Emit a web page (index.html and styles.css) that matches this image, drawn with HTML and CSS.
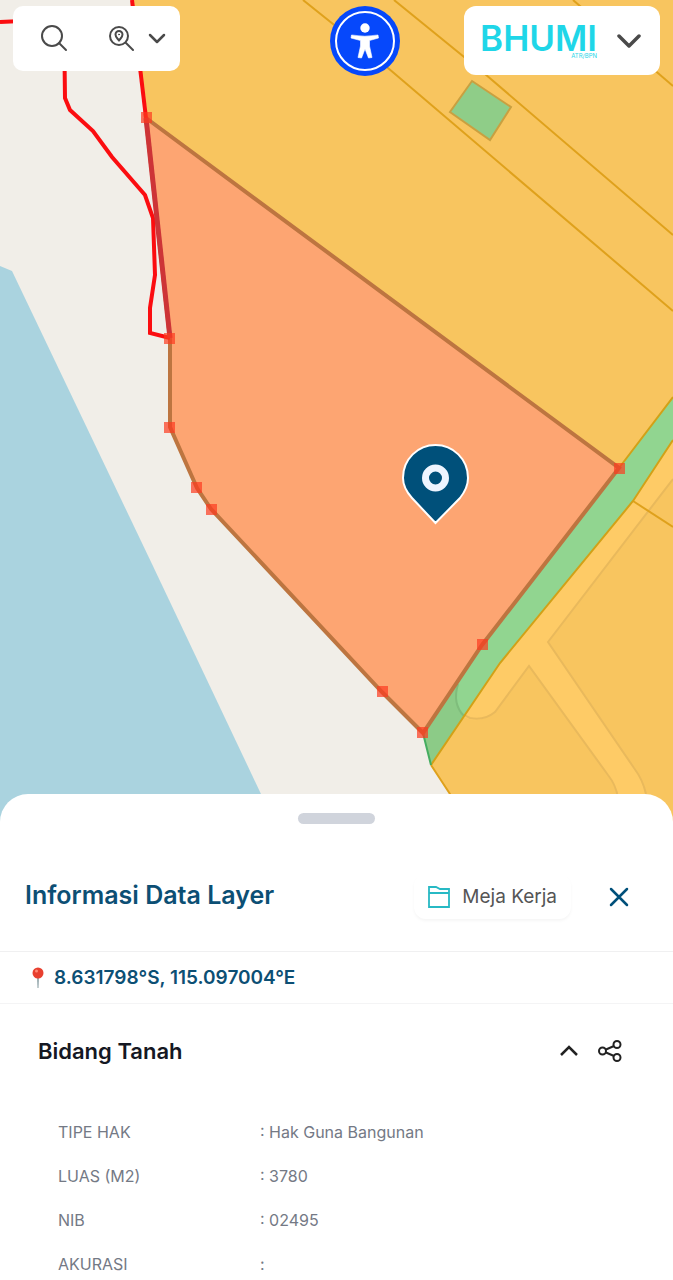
FILE: index.html
```html
<!DOCTYPE html>
<html lang="id">
<head>
  <meta charset="UTF-8">
  <meta name="viewport" content="width=device-width, initial-scale=1.0">
  <title>BHUMI ATR/BPN</title>
  <link rel="stylesheet" href="styles.css">
</head>
<body>
  <main class="map">
    <svg class="map-canvas" viewBox="0 0 673 830" role="img" aria-label="Peta bidang tanah">
      <rect width="673" height="830" fill="#f1eee8"/>
      <!-- laut -->
      <path d="M0 266 L12 271 L152 564 L261 794 L278 830 H0 Z" fill="#aad3df"/>

      <!-- zona kuning -->
      <path d="M133 0 L146 118 L619 468 L423 733 L431 765 L450 794 L474 830 H673 V0 Z" fill="#f8c55f"/>
      <!-- jalan -->
      <path d="M673 440 L633 501 L500 663 L462 716 Q478 726 495 712 L529 666 L608 775 Q616 785 618 798 L618 830 H646 V798 Q643 780 634 768 L548 642 L673 479 Z" fill="#fecb66"/>
      <path d="M455 696 Q456 712 470 718 Q484 721 495 712 L529 666 L608 775 Q616 785 618 798 M646 794 Q643 780 634 768 L548 642 L673 479" fill="none" stroke="#e9b95c" stroke-width="2"/>

      <!-- batas zona -->
      <g fill="none" stroke="#dfa11c" stroke-width="2">
        <path d="M303 0 L388 68 L673 311"/>
        <path d="M394 0 L485 74 L673 235"/>
        <path d="M573 0 L673 86"/>
        <path d="M633 501 L673 527"/>
        <path d="M431 765 L450 794 L474 830"/>
      </g>

      <path d="M472 81 L511 107 L490 140 L450 112 Z" fill="#8fcd88" stroke="#c9a040" stroke-width="2"/>

      <!-- sempadan hijau -->
      <path d="M673 397 L619 468 L482 645 L423 733 L431 765 L500 663 L633 501 L673 440 Z" fill="#91d590"/>
      <path d="M458 684 L423 733 L431 765 L464 716 Q452 704 458 684 Z" fill="#8ccb87"/>
      <path d="M464 716 Q452 704 458 684" fill="none" stroke="#7fbd7c" stroke-width="2"/>
      <path d="M619 468 L673 397 M431 765 L500 663 L633 501 L673 440" fill="none" stroke="#d2a117" stroke-width="2"/>
      <path d="M423 733 L431 765" stroke="#45ad60" stroke-width="2"/>

      <!-- bidang terpilih -->
      <path d="M146 118 L619 468 L482 645 L423 733 L382 692 L211 509 L197 488 L170 427 V339 Z" fill="#fda572" stroke="#bd7540" stroke-width="4"/>

      <g fill="none" stroke="#fb0d10" stroke-width="4">
        <path d="M0 22 L64 19 L65 98 L70 110 L93 131 L112 157 L145 195 L153 218 L155 275 L150 308 V333 L170 338"/>
        <path d="M132 0 L146 118"/>
      </g>
      <path d="M146 118 L170 338" stroke="#cd3437" stroke-width="5"/>

      <g fill="#fc3a20" fill-opacity="0.7">
        <rect x="141" y="112" width="11" height="11"/>
        <rect x="164" y="333" width="11" height="11"/>
        <rect x="164" y="422" width="11" height="11"/>
        <rect x="191" y="482" width="11" height="11"/>
        <rect x="206" y="504" width="11" height="11"/>
        <rect x="377" y="686" width="11" height="11"/>
        <rect x="417" y="727" width="11" height="11"/>
        <rect x="477" y="639" width="11" height="11"/>
        <rect x="614" y="463" width="11" height="11"/>
      </g>

      <!-- penanda lokasi -->
      <path d="M435.500 523 L412 498 Q403 488 403 478 C403 459 418 445 435.500 445 S468 459 468 478 Q468 488 460 498 Z" fill="#00507a" stroke="#fff" stroke-width="2"/>
      <circle cx="435.500" cy="478" r="10" fill="#00507a" stroke="#eef5ff" stroke-width="7"/>
    </svg>

    <div class="topbar">
      <div class="search-box">
        <button class="icon-button" type="button" aria-label="Cari">
          <svg width="28" height="28" viewBox="0 0 28 28" fill="none" stroke="#4a4a4a" stroke-width="2" stroke-linecap="round">
            <circle cx="12" cy="11" r="10"/>
            <path d="M19 18 L26 25"/>
          </svg>
        </button>
        <button class="icon-button search-place" type="button" aria-label="Cari lokasi">
          <svg width="26" height="26" viewBox="0 0 26 26" fill="none" stroke="#4a4a4a" stroke-width="2" stroke-linecap="round">
            <circle cx="11" cy="10" r="9"/>
            <path d="M18 17 L25 24"/>
            <path d="M11 14.500 C9 12 7.500 11 7.500 8.500 A3.500 3.500 0 0 1 14.500 8.500 C14.500 11 13 12 11 14.500 Z"/>
            <circle cx="11" cy="8.500" r="0.500" stroke-width="1"/>
          </svg>
          <svg width="18" height="12" viewBox="0 0 18 12" fill="none" stroke="#4a4a4a" stroke-width="2.500" stroke-linecap="round" stroke-linejoin="round">
            <path d="M2 2 L9 9 L16 2"/>
          </svg>
        </button>
      </div>

      <button class="icon-button access" type="button" aria-label="Aksesibilitas">
        <svg width="70" height="70" viewBox="0 0 70 70">
          <circle cx="35" cy="35" r="35" fill="#0648fb"/>
          <circle cx="35" cy="35" r="29" fill="none" stroke="#fff" stroke-width="2"/>
          <circle cx="35" cy="22" r="4.700" fill="#fff"/>
          <path d="M21.500 29 Q35 31.500 48 29 L48.500 32 L39.500 34.500 V40 L42 51.500 L38.500 52 L35 43 L31.500 52 L28 51.500 L30.500 40 V34.500 L21 32 Z" fill="#fff" stroke="#fff" stroke-width="0.600" stroke-linejoin="round"/>
        </svg>
      </button>

      <button class="brand" type="button">
        <span class="brand-logo">
          <span class="brand-name">BHUMI</span>
          <span class="brand-sub">ATR/BPN</span>
        </span>
        <svg width="24" height="16" viewBox="0 0 24 16" fill="none" stroke="#4a4a4a" stroke-width="3.500" stroke-linecap="round" stroke-linejoin="round">
          <path d="M2 3 L12 13 L22 3"/>
        </svg>
      </button>
    </div>
  </main>

  <section class="sheet">
    <div class="sheet-handle"></div>

    <header class="sheet-header">
      <h1 class="sheet-title">Informasi Data Layer</h1>
      <button class="workspace-button" type="button">
        <svg width="22" height="22" viewBox="0 0 22 22" fill="none" stroke="#27b9c4" stroke-width="1.800">
          <path d="M1 21 V1 H8 L12 3 H21 V21 Z M1 7 H21"/>
        </svg>
        Meja Kerja
      </button>
      <button class="icon-button" type="button" aria-label="Tutup">
        <svg width="20" height="20" viewBox="0 0 20 20" fill="none" stroke="#00507a" stroke-width="2.500" stroke-linecap="round">
          <path d="M2 2 L18 18 M18 2 L2 18"/>
        </svg>
      </button>
    </header>

    <div class="coordinate">
      <svg width="12" height="22" viewBox="0 0 12 22">
        <path d="M5 9 H7 L6.500 21 H5.500 Z" fill="#8fa3a8"/>
        <circle cx="6" cy="6" r="5.500" fill="#e8402f"/>
        <circle cx="4.500" cy="4" r="1.500" fill="#ff8a75"/>
      </svg>
      <span>8.631798°S, 115.097004°E</span>
    </div>

    <div class="layer-header">
      <h2 class="layer-title">Bidang Tanah</h2>
      <button class="icon-button" type="button" aria-label="Tutup rincian">
        <svg width="18" height="12" viewBox="0 0 18 12" fill="none" stroke="#222" stroke-width="2.500">
          <path d="M1 10 L9 2 L17 10"/>
        </svg>
      </button>
      <button class="icon-button" type="button" aria-label="Bagikan">
        <svg width="24" height="22" viewBox="0 0 24 22" fill="none" stroke="#222" stroke-width="2">
          <circle cx="4.500" cy="11" r="3.500"/>
          <circle cx="19" cy="4.500" r="3.500"/>
          <circle cx="19" cy="17.500" r="3.500"/>
          <path d="M8 9.500 L16 6 M8 12.500 L16 16"/>
        </svg>
      </button>
    </div>

    <table class="detail">
      <tr><th scope="row">TIPE HAK</th><td>: Hak Guna Bangunan</td></tr>
      <tr><th scope="row">LUAS (M2)</th><td>: 3780</td></tr>
      <tr><th scope="row">NIB</th><td>: 02495</td></tr>
      <tr><th scope="row">AKURASI</th><td>:</td></tr>
    </table>
  </section>
</body>
</html>
```
FILE: styles.css
```css
* {
  box-sizing: border-box;
}

body {
  margin: 0;
  background-color: #fff;
  font-family: Inter, "Liberation Sans", sans-serif;
}

svg {
  display: block;
  flex-shrink: 0;
}

button {
  font-family: inherit;
  cursor: pointer;
}

.icon-button {
  display: flex;
  align-items: center;
  padding: 0;
  border: none;
  background: none;
}

/* peta */
.map {
  position: relative;
}

.map-canvas {
  width: 100%;
  height: auto;
}

.topbar {
  position: absolute;
  top: 6px;
  left: 13px;
  right: 13px;
  display: flex;
  align-items: flex-start;
}

.search-box {
  display: flex;
  align-items: center;
  gap: 40px;
  height: 65px;
  padding: 0 14px 0 27px;
  border-radius: 10px;
  background-color: #fff;
}

.search-place {
  gap: 14px;
}

.access {
  margin-left: auto;
  margin-right: 64px;
}

.brand {
  display: flex;
  align-items: center;
  gap: 20px;
  height: 69px;
  padding: 0 19px 0 16px;
  border: none;
  border-radius: 12px;
  background-color: #fff;
}

.brand-logo {
  display: flex;
  flex-direction: column;
  color: #1fd6e8;
}

.brand-name {
  font-size: 35px;
  line-height: 30px;
  font-weight: 600;
}

.brand-sub {
  align-self: flex-end;
  font-size: 6px;
  line-height: 6px;
}

/* panel informasi */
.sheet {
  position: relative;
  margin-top: -36px;
  padding-top: 19px;
  border-radius: 28px 28px 0 0;
  background-color: #fff;
}

.sheet-handle {
  width: 77px;
  height: 11px;
  margin: 0 auto;
  border-radius: 6px;
  background-color: #d0d4dc;
}

.sheet-header {
  display: flex;
  align-items: center;
  margin-top: 50px;
  padding: 0 44px 32px 25px;
  border-bottom: 1px solid #f0f0f1;
}

.sheet-title {
  flex: 1;
  align-self: flex-start;
  margin: 0;
  color: #0c4f74;
  font-size: 25px;
  line-height: 43px;
  font-weight: 600;
}

.workspace-button {
  display: flex;
  align-items: center;
  gap: 12px;
  height: 45px;
  margin-right: 38px;
  padding: 0 14px;
  border: none;
  border-radius: 12px;
  background-color: #fff;
  box-shadow: 0 2px 3px rgba(0, 0, 0, 0.04);
  color: #555;
  font-size: 19px;
}

.coordinate {
  display: flex;
  align-items: center;
  gap: 10px;
  padding: 13px 32px;
  border-bottom: 1px solid #f4f4f5;
  color: #0c4f74;
  font-size: 19px;
  line-height: 25px;
  font-weight: 600;
}

.layer-header {
  display: flex;
  align-items: center;
  gap: 20px;
  padding: 31px 51px 43px 38px;
}

.layer-title {
  flex: 1;
  margin: 0;
  color: #151823;
  font-size: 22px;
  line-height: 32px;
  font-weight: 600;
}

.detail {
  width: 100%;
  padding: 0 56px;
  border-spacing: 0;
  color: #747985;
  font-size: 16px;
  line-height: 20px;
}

.detail th,
.detail td {
  padding: 12px 2px;
  text-align: left;
  font-weight: 400;
}

.detail th {
  width: 36%;
}
```
